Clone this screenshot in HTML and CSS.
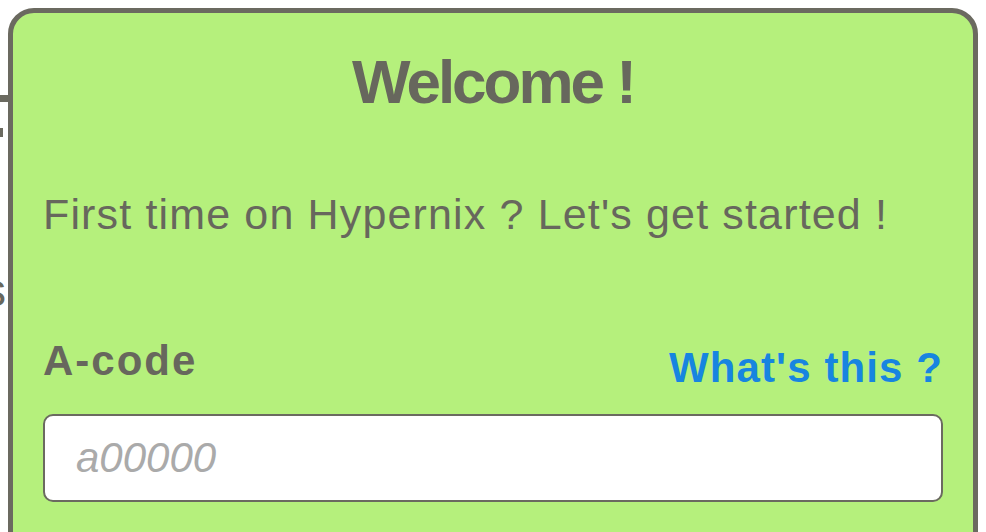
FILE: index.html
```html
<!DOCTYPE html>
<html lang="en">

<head>
    <meta charset="UTF-8">
    <meta name="viewport" content="width=device-width, initial-scale=1.0">
    <title>Hypernix</title>
    <link rel="stylesheet" href="styles.css">
</head>

<body>
    <!-- page underneath the popup -->
    <div class="pagina">
        <div class="pagina-linea"></div>
        <div class="pagina-marca"></div>
        <p class="pagina-texto">s</p>
    </div>

    <div class="popup">
        <h1 class="titulo">Welcome !</h1>
        <p class="intro">First time on Hypernix ? Let's get started !</p>

        <form class="f_codigo">
            <div class="fila">
                <label for="f_acode">A-code</label>
                <a href="#" class="ayuda">What's this ?</a>
            </div>
            <input id="f_acode" placeholder="a00000" />
        </form>
    </div>
</body>

</html>
```

FILE: styles.css
```css
body {
    margin: 0;
    height: 532px;
    overflow: hidden;
    background-color: #ffffff;
    font-family: "Liberation Sans", Arial, sans-serif;
    color: #67675d;
    position: relative;
}

.pagina {
    padding-top: 95px;
}

.pagina-linea {
    width: 20px;
    height: 7px;
    background-color: #6b6a60;
}

.pagina-marca {
    width: 3px;
    height: 9px;
    margin-top: 26px;
    background-color: #6b6a60;
}

.pagina-texto {
    margin: 130px 0 0 -17px;
    font-size: 46px;
    line-height: 46px;
}

.popup {
    position: absolute;
    top: 8px;
    left: 8px;
    width: 970px;
    height: 600px;
    box-sizing: border-box;
    padding: 38px 30px 0 30px;
    border: 5px solid #6b6a60;
    border-radius: 26px;
    background-color: #b5f07c;
}

.titulo {
    margin: 0;
    font-size: 62px;
    line-height: 62px;
    font-weight: bold;
    letter-spacing: -3px;
    text-align: center;
}

.intro {
    margin: 80px 0 0 0;
    font-size: 43px;
    line-height: 43px;
    letter-spacing: 1.15px;
}

.f_codigo {
    display: flex;
    flex-direction: column;
    gap: 25px;
    margin-top: 104px;
}

.fila {
    display: flex;
    justify-content: space-between;
    align-items: flex-end;
}

.fila label {
    font-size: 42px;
    line-height: 42px;
    font-weight: bold;
    letter-spacing: 2px;
    margin-bottom: 7px;
}

.ayuda {
    font-size: 42px;
    line-height: 42px;
    font-weight: bold;
    letter-spacing: 1.1px;
    color: #1785e0;
    text-decoration: none;
}

input {
    height: 88px;
    box-sizing: border-box;
    padding: 0 31px;
    border: 2.5px solid #6b6a60;
    border-radius: 10px;
    background-color: #ffffff;
    font-family: "Liberation Sans", Arial, sans-serif;
    font-size: 42px;
    color: #67675d;
}

input::placeholder {
    color: #aaaaaa;
    font-style: italic;
}
```
